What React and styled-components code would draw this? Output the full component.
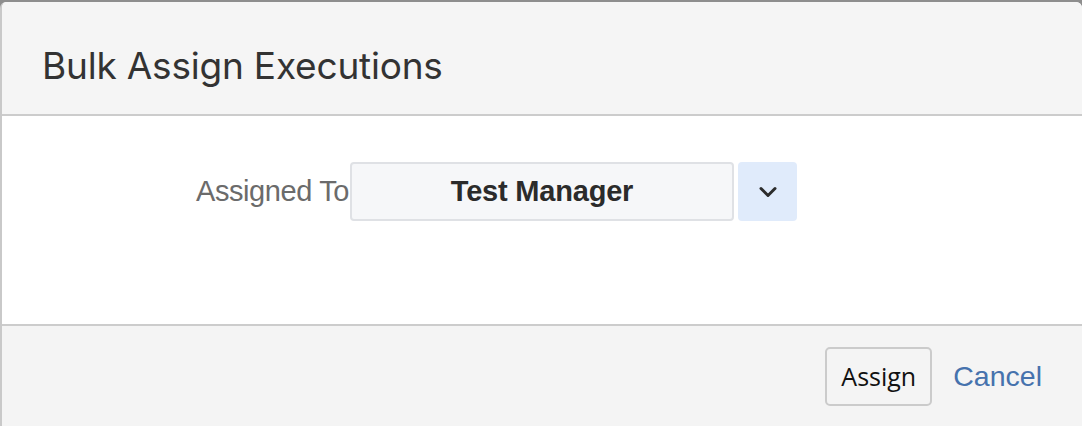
import React from "react";
import styled, { createGlobalStyle } from "styled-components";

const Global = createGlobalStyle`
  html, body { margin: 0; padding: 0; }
  body { background: #8e8e8e; overflow: hidden; }
  * { box-sizing: border-box; }
`;

const Dialog = styled.div`
  margin-top: 2px;
  width: 1082px;
  height: 424px;
  border-left: 2px solid #c9c9c9;
  border-radius: 6px 6px 0 0;
  overflow: hidden;
  display: flex;
  flex-direction: column;
  background: #fff;
`;

const Header = styled.div`
  height: 114px;
  flex: none;
  background: #f5f5f5;
  border-bottom: 2px solid #cccccc;
  padding: 42px 40px 0 40px;
`;

const Title = styled.h1`
  margin: 0;
  font-family: Inter, "Liberation Sans", sans-serif;
  font-weight: 400;
  font-size: 37px;
  line-height: 44px;
  color: #333;
  letter-spacing: -0.2px;
`;

const Body = styled.div`
  height: 208px;
  flex: none;
  background: #fff;
  padding-top: 46px;
`;

const Row = styled.div`
  display: flex;
  align-items: center;
`;

const Label = styled.label`
  width: 348px;
  padding-right: 1px;
  text-align: right;
  font-family: "Liberation Sans", Arial, sans-serif;
  font-size: 29px;
  color: #6b6b6b;
  letter-spacing: -0.4px;
  white-space: nowrap;
`;

const Select = styled.div`
  width: 384px;
  height: 59px;
  background: #f6f7f9;
  border: 2px solid #dfe1e5;
  border-radius: 4px;
  display: flex;
  align-items: center;
  justify-content: center;
  font-family: "Liberation Sans", Arial, sans-serif;
  font-weight: 700;
  font-size: 29px;
  letter-spacing: -0.2px;
  color: #2b2b2b;
`;

const DropButton = styled.button`
  margin-left: 4px;
  width: 59px;
  height: 59px;
  border: none;
  border-radius: 4px;
  background: #e0ebfb;
  display: flex;
  align-items: center;
  justify-content: center;
  padding: 0;
`;

const Footer = styled.div`
  flex: 1;
  background: #f4f4f4;
  border-top: 2px solid #cccccc;
  display: flex;
  justify-content: flex-end;
  align-items: center;
  padding: 0 40px 0 0;
  gap: 21px;
`;

const Button = styled.button`
  width: 107px;
  height: 59px;
  border: 2px solid #cbcbcb;
  border-radius: 5px;
  background: #f4f4f4;
  font-family: "Open Sans", "DejaVu Sans", sans-serif;
  font-size: 25px;
  color: #111;
  padding: 0;
`;

const LinkButton = styled.a`
  font-family: "Liberation Sans", Arial, sans-serif;
  font-size: 28.5px;
  color: #4672ad;
  text-decoration: none;
`;

export default function App() {
  return (
    <>
      <Global />
      <Dialog>
        <Header>
          <Title>Bulk Assign Executions</Title>
        </Header>
        <Body>
          <Row>
            <Label>Assigned To</Label>
            <Select>Test Manager</Select>
            <DropButton aria-label="open">
              <svg width="22" height="14" viewBox="0 0 22 14">
                <polyline
                  points="4,3.5 11,10.5 18,3.5"
                  fill="none"
                  stroke="#2c2c2c"
                  strokeWidth="3"
                  strokeLinecap="round"
                  strokeLinejoin="round"
                />
              </svg>
            </DropButton>
          </Row>
        </Body>
        <Footer>
          <Button>Assign</Button>
          <LinkButton href="#">Cancel</LinkButton>
        </Footer>
      </Dialog>
    </>
  );
}
